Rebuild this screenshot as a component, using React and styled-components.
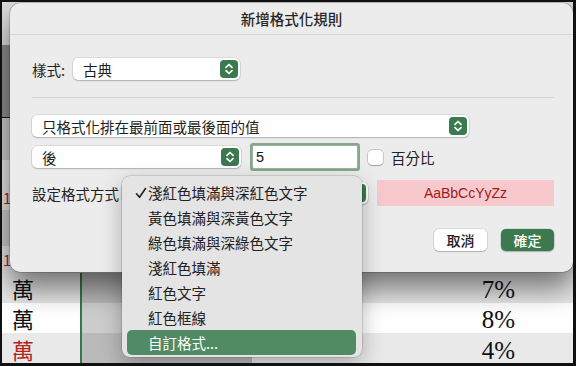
import React from 'react'
import styled, { createGlobalStyle } from 'styled-components'

const GlobalStyle = createGlobalStyle`
  html, body {
    margin: 0;
    padding: 0;
    background: #111;
  }
  body {
    font-family: "Noto Sans CJK TC", "Liberation Sans", sans-serif;
  }
`

const Frame = styled.div`
  position: relative;
  width: 576px;
  height: 366px;
  box-sizing: border-box;
  border: solid #111;
  border-width: 2px 3px 3px 2px;
  overflow: hidden;
  background: #e8e8e8;
`

/* spreadsheet behind the dialog */
const Sheet = styled.div`
  display: flex;
  flex-direction: column;
  height: 100%;
`

const Band = styled.div`
  height: ${p => p.h}px;
  flex-shrink: 0;
  background: ${p => p.bg};
  border-bottom: ${p => (p.line ? '1px solid #1c1c1c' : 'none')};
  display: flex;
  align-items: center;
  color: #b01e1e;
  font-size: 15px;
  padding-left: 1px;
`

const SheetRow = styled.div`
  height: ${p => p.h || 30}px;
  flex-shrink: 0;
  display: grid;
  grid-template-columns: 78px 2px 170px 1fr;
  background: ${p => p.bg};
`

const NameCell = styled.div`
  display: flex;
  align-items: center;
  padding-left: 10px;
  font-size: 22px;
  line-height: 26px;
  color: ${p => (p.red ? '#b3261e' : '#111')};
`

const GreenLine = styled.div`
  background: #2f7a45;
`

const ShadeCell = styled.div`
  background: rgba(0, 0, 0, 0.2);
`

const ValueCell = styled.div`
  display: flex;
  align-items: center;
  justify-content: flex-end;
  padding-right: 58px;
  padding-top: 4px;
  font-family: "Liberation Serif", serif;
  font-size: 25px;
  line-height: 24px;
  color: #111;
`

/* dialog */
const Dialog = styled.div`
  position: absolute;
  top: 1px;
  left: 8px;
  right: 0;
  display: flex;
  flex-direction: column;
  padding: 0 19px 21px 22px;
  background: #ececec;
  border-radius: 10px;
  box-shadow: 0 0 0 0.5px rgba(0, 0, 0, 0.3), 0 16px 28px rgba(0, 0, 0, 0.5);
`

const TitleBar = styled.div`
  height: 31px;
  margin: 0 -19px 0 -22px;
  display: flex;
  align-items: center;
  justify-content: center;
  border-bottom: 1px solid #d6d6d6;
  font-size: 14.5px;
  font-weight: 500;
  color: #262626;
`

const Row = styled.div`
  display: flex;
  align-items: center;
  height: ${p => p.h || 22}px;
  margin-top: ${p => p.mt}px;
  gap: ${p => p.gap || 0}px;
  justify-content: ${p => (p.end ? 'flex-end' : 'flex-start')};
`

const Label = styled.span`
  font-size: 14.5px;
  color: #222;
  width: ${p => (p.w ? `${p.w}px` : 'auto')};
  flex-shrink: 0;
  white-space: nowrap;
`

const Separator = styled.div`
  height: 1px;
  margin-top: 17px;
  background: #d4d4d4;
`

const Select = styled.div`
  width: ${p => p.w}px;
  height: 22px;
  flex-shrink: 0;
  box-sizing: border-box;
  display: flex;
  align-items: center;
  justify-content: space-between;
  padding: 0 2px 0 10px;
  background: #fff;
  border-radius: 5px;
  box-shadow: 0 0 0 0.5px rgba(0, 0, 0, 0.14), 0 1px 1.5px rgba(0, 0, 0, 0.2);
  font-size: 14.5px;
  color: #1e1e1e;
`

const StepperBox = styled.span`
  width: 18px;
  height: 18px;
  margin-left: auto;
  border-radius: 4px;
  background: #3b7a4f;
  display: flex;
  align-items: center;
  justify-content: center;
`

const Stepper = () => (
  <StepperBox>
    <svg width="18" height="18" viewBox="0 0 18 18" fill="none" stroke="#fff" strokeWidth="1.7" strokeLinecap="round" strokeLinejoin="round">
      <path d="M6 7.3 L9 4.5 L12 7.3" />
      <path d="M6 10.7 L9 13.5 L12 10.7" />
    </svg>
  </StepperBox>
)

const NumberInput = styled.div`
  width: 104px;
  height: 22px;
  margin-left: 12px;
  box-sizing: border-box;
  display: flex;
  align-items: center;
  padding-left: 3px;
  background: #fff;
  box-shadow: 0 0 0 1px #9bb69d, 0 0 0 3px #86a78a;
  border-radius: 1px;
  font-family: "Liberation Sans", sans-serif;
  font-size: 14.5px;
  color: #111;
`

const Checkbox = styled.span`
  width: 15px;
  height: 15px;
  margin: 0 8px 0 11px;
  flex-shrink: 0;
  background: #fff;
  border-radius: 4px;
  box-shadow: 0 0 0 0.5px rgba(0, 0, 0, 0.28), 0 0.5px 1px rgba(0, 0, 0, 0.2);
`

const Preview = styled.div`
  flex: 1;
  height: 26px;
  margin-left: 9px;
  display: flex;
  align-items: center;
  justify-content: center;
  background: #f7c9cd;
  color: #9c1a1a;
  font-family: "Liberation Sans", sans-serif;
  font-size: 14px;
`

const Button = styled.div`
  width: 53px;
  height: 22px;
  border-radius: 5px;
  display: flex;
  align-items: center;
  justify-content: center;
  font-size: 14px;
  font-weight: 500;
  background: ${p => (p.primary ? '#3b7a4f' : '#fff')};
  color: ${p => (p.primary ? '#fff' : '#1e1e1e')};
  box-shadow: 0 0 0 0.5px rgba(0, 0, 0, 0.15), 0 1px 1.5px rgba(0, 0, 0, 0.2);
`

/* popup menu */
const Menu = styled.div`
  position: absolute;
  left: 120px;
  top: 174px;
  width: 240px;
  box-sizing: border-box;
  padding: 4px 6px 2px 5px;
  background: #e5e4e4;
  border-radius: 8px;
  box-shadow: 0 0 0 0.5px rgba(0, 0, 0, 0.22), 0 8px 22px rgba(0, 0, 0, 0.28);
`

const MenuItem = styled.div`
  height: 25px;
  display: flex;
  align-items: center;
  border-radius: 5px;
  font-size: 14.5px;
  background: ${p => (p.active ? '#508b65' : 'transparent')};
  color: ${p => (p.active ? '#fff' : '#222')};
`

const CheckSlot = styled.span`
  width: 21px;
  flex-shrink: 0;
  display: flex;
  align-items: center;
  padding-left: 8px;
  box-sizing: border-box;
`

const options = [
  '淺紅色填滿與深紅色文字',
  '黃色填滿與深黃色文字',
  '綠色填滿與深綠色文字',
  '淺紅色填滿',
  '紅色文字',
  '紅色框線',
  '自訂格式...',
]

const rows = [
  { bg: '#e6e6e6', value: '7%' },
  { bg: '#ffffff', value: '8%' },
  { bg: '#e9e9e9', value: '4%', red: true, h: 31 },
]

export default function App() {
  return (
    <>
      <GlobalStyle />
      <Frame>
        <Sheet>
          <Band h={43} bg="#dadada" />
          <Band h={72} bg="#8c8c8c" line />
          <Band h={42} bg="#c9c9c9" />
          <Band h={25} bg="#e3e3e3" />
          <Band h={25} bg="#e2e2e2">1</Band>
          <Band h={36} bg="#c8c8c8" />
          <Band h={27} bg="#e2e2e2">1</Band>
          {rows.map(r => (
            <SheetRow key={r.value} bg={r.bg} h={r.h}>
              <NameCell red={r.red}>萬</NameCell>
              <GreenLine />
              <ShadeCell />
              <ValueCell>{r.value}</ValueCell>
            </SheetRow>
          ))}
        </Sheet>

        <Dialog>
          <TitleBar>新增格式化規則</TitleBar>

          <Row mt={23} gap={8}>
            <Label>樣式:</Label>
            <Select w={167}>
              古典
              <Stepper />
            </Select>
          </Row>

          <Separator />

          <Row mt={17}>
            <Select w={437}>
              只格式化排在最前面或最後面的值
              <Stepper />
            </Select>
          </Row>

          <Row mt={9}>
            <Select w={209}>
              後
              <Stepper />
            </Select>
            <NumberInput>5</NumberInput>
            <Checkbox />
            <Label>百分比</Label>
          </Row>

          <Row mt={12} h={26}>
            <Label w={90}>設定格式方式</Label>
            {/* its text is hidden under the open menu */}
            <Select w={246}>
              <Stepper />
            </Select>
            <Preview>AaBbCcYyZz</Preview>
          </Row>

          <Row mt={23} gap={14} end>
            <Button>取消</Button>
            <Button primary>確定</Button>
          </Row>
        </Dialog>

        <Menu>
          {options.map((o, i) => (
            <MenuItem key={o} active={i === options.length - 1}>
              <CheckSlot>
                {i === 0 && (
                  <svg width="12" height="12" viewBox="0 0 12 12" fill="none" stroke="#222" strokeWidth="1.6" strokeLinecap="round" strokeLinejoin="round">
                    <path d="M1.5 6.8 L4.5 10.3 L10.5 1.5" />
                  </svg>
                )}
              </CheckSlot>
              {o}
            </MenuItem>
          ))}
        </Menu>
      </Frame>
    </>
  )
}
